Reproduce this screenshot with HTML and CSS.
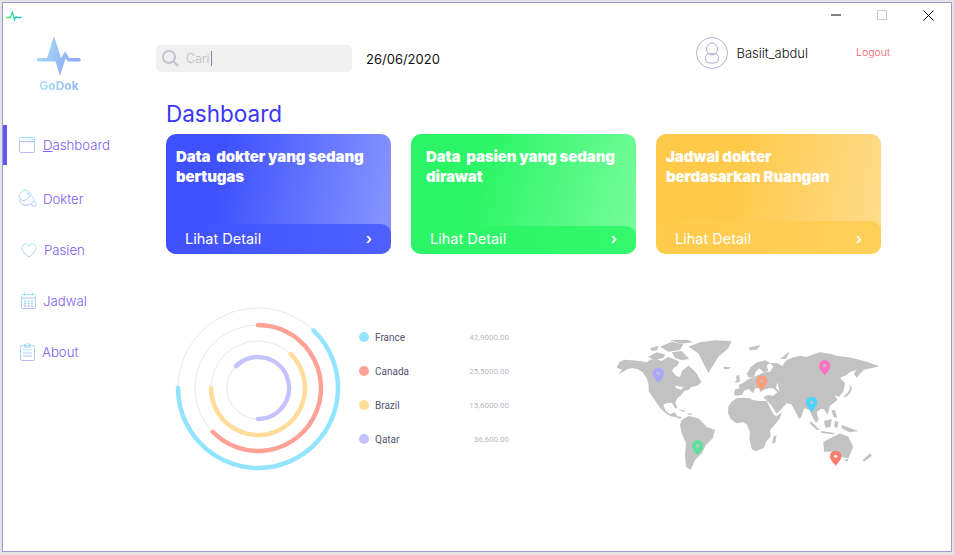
FILE: index.html
```html
<!DOCTYPE html>
<html lang="en">
<head>
    <meta charset="UTF-8">
    <meta name="viewport" content="width=device-width, initial-scale=1.0">
    <title>GoDok</title>
    <link rel="stylesheet" href="styles.css">
</head>
<body>
    <div class="window">
        <!-- Title bar -->
        <div class="titlebar">
            <svg class="app-icon" width="16" height="10" viewBox="0 0 16 10">
                <defs>
                    <linearGradient id="appGrad" x1="0" y1="0" x2="1" y2="0">
                        <stop offset="0" stop-color="#4df36a"/>
                        <stop offset="1" stop-color="#1cb8e0"/>
                    </linearGradient>
                </defs>
                <path d="M0 6.500H4.500L6.500 1L8.500 9L10 5.500L11 6.500H15.500" fill="none" stroke="url(#appGrad)" stroke-width="1.300"/>
            </svg>
            <div class="win-controls">
                <div class="win-btn"><svg width="10" height="10" viewBox="0 0 10 10"><path d="M0 5H10" stroke="#000" stroke-width="1"/></svg></div>
                <div class="win-btn"><svg width="10" height="10" viewBox="0 0 10 10"><rect x="0.500" y="0.500" width="9" height="9" fill="none" stroke="#ccc"/></svg></div>
                <div class="win-btn"><svg width="11" height="11" viewBox="0 0 11 11"><path d="M0.500 0.500L10.500 10.500M10.500 0.500L0.500 10.500" stroke="#000" stroke-width="1"/></svg></div>
            </div>
        </div>

        <div class="app">
            <!-- Sidebar -->
            <aside class="sidebar">
                <div class="logo">
                    <svg width="44" height="40" viewBox="0 0 44 40">
                        <defs>
                            <linearGradient id="logoGrad" x1="0" y1="0" x2="1" y2="0.300">
                                <stop offset="0" stop-color="#a6e4f8"/>
                                <stop offset="1" stop-color="#8fa8f5"/>
                            </linearGradient>
                            <linearGradient id="navGrad" x1="0" y1="0" x2="0" y2="1">
                                <stop offset="0" stop-color="#9fe9f4"/>
                                <stop offset="1" stop-color="#b4bcfb"/>
                            </linearGradient>
                        </defs>
                        <path d="M1.700 22H10L17 0L21.500 14L24 22L28 15.500L32.500 22H42A1.700 1.700 0 0 1 42 25.500H31L28.500 22.500L23 40L18.500 25.500H1.700A1.700 1.700 0 0 1 1.700 22Z" fill="url(#logoGrad)"/>
                    </svg>
                    <span class="logo-text">GoDok</span>
                </div>
                <nav class="nav">
                    <a class="nav-item active">
                        <svg width="20" height="20" viewBox="0 0 20 20" fill="none" stroke="url(#navGrad)">
                            <rect x="2.500" y="2.500" width="15" height="15" rx="1.500"/>
                            <path d="M2.500 6.500H17.500M11 4.500H12M13 4.500H14M15 4.500H16"/>
                        </svg>
                        <span><u>D</u>ashboard</span>
                    </a>
                    <a class="nav-item">
                        <svg width="20" height="20" viewBox="0 0 20 20" fill="none" stroke="url(#navGrad)">
                            <path d="M8 1C10 1 13 3 13.500 4.500C14 6 12 8 10.500 9.500C9 11 7 12 5.500 11.500C4 11 2 8.500 2 7C2 5 6 1 8 1Z"/>
                            <circle cx="11" cy="4.500" r="0.800"/>
                            <path d="M3 10C2.500 13 4 15.500 7 16C10 16.500 12 15.500 14.500 15"/>
                            <path d="M13.500 6C15.500 7.500 17 9.500 17 12.500"/>
                            <circle cx="17" cy="15" r="2.300"/>
                        </svg>
                        <span>Dokter</span>
                    </a>
                    <a class="nav-item shift-right">
                        <svg width="20" height="20" viewBox="0 0 20 20" fill="none" stroke="url(#navGrad)">
                            <path d="M12 17C9 14.500 5 11.500 5 7.800C5 5.500 6.800 4 8.500 4C10 4 11.300 4.800 12 6.200C12.700 4.800 14 4 15.500 4C17.200 4 19 5.500 19 7.800C19 11.500 15 14.500 12 17Z"/>
                        </svg>
                        <span>Pasien</span>
                    </a>
                    <a class="nav-item">
                        <svg width="20" height="20" viewBox="0 0 20 20" fill="none" stroke="url(#navGrad)">
                            <rect x="4.500" y="3.500" width="14" height="14" rx="1"/>
                            <path d="M4.500 7H18.500M7.500 1.500V4.500M15.500 1.500V4.500"/>
                            <path d="M7 10H9M10.500 10H12.500M14 10H16M7 12.500H9M10.500 12.500H12.500M14 12.500H16M7 15H9M10.500 15H12.500M14 15H16" stroke-width="1.500"/>
                        </svg>
                        <span>Jadwal</span>
                    </a>
                    <a class="nav-item shift-left">
                        <svg width="20" height="20" viewBox="0 0 20 20" fill="none" stroke="url(#navGrad)">
                            <rect x="3.500" y="3.500" width="14" height="15" rx="1.500"/>
                            <path d="M7.500 3.500V2.500H9C9 0.800 12 0.800 12 2.500H13.500V5H7.500Z"/>
                            <path d="M6 8H15M6 11H15M6 14H15"/>
                        </svg>
                        <span>About</span>
                    </a>
                </nav>
            </aside>

            <!-- Main content -->
            <main class="content">
                <div class="topbar">
                    <div class="search">
                        <svg width="19" height="19" viewBox="0 0 19 19" fill="none" stroke="#c4c2d0" stroke-width="2">
                            <circle cx="8" cy="8" r="6"/>
                            <path d="M12.500 12.500L17 17"/>
                        </svg>
                        <span class="search-text">Cari</span>
                    </div>
                    <div class="date">26/06/2020</div>
                    <div class="user">
                        <svg width="32" height="32" viewBox="0 0 32 32" fill="none" stroke="#b3b1cb">
                            <circle cx="16" cy="16" r="15.500"/>
                            <ellipse cx="16" cy="12" rx="5.500" ry="6"/>
                            <rect x="9.500" y="16.500" width="13" height="9.500" rx="4"/>
                        </svg>
                        <span class="user-name">Basiit_abdul</span>
                    </div>
                    <a class="logout">Logout</a>
                </div>

                <h1 class="page-title">Dashboard</h1>

                <div class="cards">
                    <div class="card card-blue">
                        <div class="card-title">Data&nbsp; dokter yang sedang<br>bertugas</div>
                        <div class="card-foot"><span>Lihat Detail</span><span class="chev">&rsaquo;</span></div>
                    </div>
                    <div class="card card-green">
                        <div class="card-title">Data&nbsp; pasien yang sedang<br>dirawat</div>
                        <div class="card-foot"><span>Lihat Detail</span><span class="chev">&rsaquo;</span></div>
                    </div>
                    <div class="card card-yellow">
                        <div class="card-title">Jadwal dokter<br>berdasarkan Ruangan</div>
                        <div class="card-foot"><span>Lihat Detail</span><span class="chev">&rsaquo;</span></div>
                    </div>
                </div>

                <div class="stats">
                    <svg class="rings" width="170" height="170" viewBox="0 0 170 170" fill="none" stroke-linecap="round">
                        <g stroke="#e9e9e9" stroke-width="1">
                            <circle cx="85" cy="85" r="80"/>
                            <circle cx="85" cy="85" r="63"/>
                            <circle cx="85" cy="85" r="47"/>
                            <circle cx="85" cy="85" r="31"/>
                        </g>
                        <g stroke-width="4.500">
                            <path d="M140.600 27.500A80 80 0 1 1 5 85" stroke="#93e5fd"/>
                            <path d="M85 22A63 63 0 1 1 39.700 128.800" stroke="#fea295"/>
                            <path d="M117.600 51.200A47 47 0 1 1 38 85" stroke="#fedd9b"/>
                            <path d="M63.100 63.100A31 31 0 1 1 85 116" stroke="#c5c3fe"/>
                        </g>
                    </svg>

                    <div class="legend">
                        <div class="legend-row"><i class="dot dot-france"></i><span class="legend-name">France</span><span class="legend-val">42,9000.00</span></div>
                        <div class="legend-row"><i class="dot dot-canada"></i><span class="legend-name">Canada</span><span class="legend-val">25,5000.00</span></div>
                        <div class="legend-row"><i class="dot dot-brazil"></i><span class="legend-name">Brazil</span><span class="legend-val">15,6000.00</span></div>
                        <div class="legend-row"><i class="dot dot-qatar"></i><span class="legend-name">Qatar</span><span class="legend-val">36,600.00</span></div>
                    </div>

                    <svg class="map" width="290" height="145" viewBox="0 0 870 435">
                        <g fill="#c2c2c2">
                            <!-- North America -->
                            <path d="M50 96L58 82L72 74L95 76L118 78L140 82L150 74L170 72L185 78L205 66L222 72L238 80L232 92L222 98L216 108L228 122L240 126L246 108L256 100L266 92L280 104L292 118L304 142L292 152L274 156L266 164L252 168L244 180L232 190L226 202L232 220L226 220L216 204L200 204L190 210L196 226L210 238L224 232L232 244L246 246L240 252L226 246L212 244L196 234L180 218L168 200L156 184L146 168L146 150L140 130L128 112L112 102L96 100L82 102L70 110L56 118L66 104L54 100Z"/>
                            <!-- Arctic islands -->
                            <path d="M145 65L170 52L195 58L190 70L160 74Z"/>
                            <path d="M180 35L215 20L250 28L240 45L205 50Z"/>
                            <path d="M215 52L245 48L268 72L245 76L225 68Z"/>
                            <path d="M150 40L175 32L172 45L155 48Z"/>
                            <path d="M208 15L262 14L280 22L245 26Z"/>
                            <!-- Greenland -->
                            <path d="M265 35L300 22L345 16L395 18L385 40L355 65L340 90L325 114L310 85L295 55Z"/>
                            <path d="M370 95L392 96L385 103L372 102Z"/>
                            <!-- Caribbean -->
                            <path d="M235 222L258 228L250 231Z"/>
                            <path d="M262 234L280 236L268 240Z"/>
                            <!-- South America -->
                            <path d="M245 255L265 243L295 250L320 275L345 285L338 310L318 330L305 355L285 375L272 405L258 395L255 360L258 325L245 295L240 270Z"/>
                            <!-- Africa -->
                            <path d="M385 215L395 200L410 190L430 188L448 190L460 196L480 198L500 198L508 214L520 238L528 244L546 232L538 252L522 272L510 285L512 305L498 320L492 338L470 348L456 344L448 310L450 290L440 268L428 262L410 265L392 252L384 235Z"/>
                            <path d="M520 305L530 300L526 322L516 328Z"/>
                            <!-- Eurasia -->
                            <path d="M402 178L404 164L418 160L416 150L432 142L446 132L470 130L488 124L492 112L510 110L520 95L510 84L530 84L548 92L556 78L575 68L600 62L620 66L640 58L660 52L690 56L710 62L740 66L770 72L800 80L838 94L812 100L792 104L780 116L770 128L762 118L768 104L750 112L735 122L720 128L735 145L730 170L716 186L704 180L712 195L700 205L690 212L682 240L672 222L662 222L650 232L656 255L648 264L638 246L628 225L612 220L604 245L598 252L582 222L574 208L560 205L548 218L530 236L516 214L504 200L490 186L504 180L520 182L532 172L520 160L505 160L490 165L480 172L478 160L465 160L460 175L445 162L432 168L425 180L405 182Z"/>
                            <path d="M440 118L452 96L472 82L496 76L510 84L500 92L505 108L490 112L478 100L466 112L462 126L448 128Z"/>
                            <path d="M448 132L470 122L492 112L492 130Z"/>
                            <path d="M408 122L418 120L420 140L404 144L410 134Z"/>
                            <path d="M445 38L482 30L470 44L450 46Z"/>
                            <path d="M540 72L570 48L558 72Z"/>
                            <path d="M748 148L756 160L750 175L738 186L730 186L744 172L750 160Z"/>
                            <!-- Indonesia, Philippines -->
                            <path d="M632 258L660 285L650 285L630 266Z"/>
                            <path d="M662 288L705 294L700 298L665 294Z"/>
                            <path d="M672 258L695 252L692 276L676 278Z"/>
                            <path d="M705 258L715 260L712 280L702 274Z"/>
                            <path d="M695 225L705 225L712 250L700 245Z"/>
                            <path d="M725 270L775 288L748 292L725 280Z"/>
                            <!-- Australia -->
                            <path d="M670 320L700 305L720 295L745 305L760 335L745 370L720 365L695 350L672 350Z"/>
                            <path d="M735 372L746 372L740 382Z"/>
                            <path d="M810 355L816 362L792 380L788 376Z"/>
                        </g>
                        <g fill="#fff">
                            <path d="M225 152L250 156L244 164L228 160Z"/>
                            <path d="M532 142L538 168L528 160Z"/>
                        </g>
                        <g>
                            <path transform="translate(175 121)" d="M0 23C-8 12-17 5-17-6A17 17 0 0 1 17-6C17 5 8 12 0 23Z" fill="#a9a6fd"/>
                            <path transform="translate(485 144)" d="M0 23C-8 12-17 5-17-6A17 17 0 0 1 17-6C17 5 8 12 0 23Z" fill="#fe9d78"/>
                            <path transform="translate(674 98)" d="M0 23C-8 12-17 5-17-6A17 17 0 0 1 17-6C17 5 8 12 0 23Z" fill="#fe72c2"/>
                            <path transform="translate(635 208)" d="M0 23C-8 12-17 5-17-6A17 17 0 0 1 17-6C17 5 8 12 0 23Z" fill="#4dd3fe"/>
                            <path transform="translate(293 338)" d="M0 23C-8 12-17 5-17-6A17 17 0 0 1 17-6C17 5 8 12 0 23Z" fill="#5fdf9a"/>
                            <path transform="translate(707 370)" d="M0 23C-8 12-17 5-17-6A17 17 0 0 1 17-6C17 5 8 12 0 23Z" fill="#fd7b6e"/>
                        </g>
                        <g fill="#c2c2c2">
                            <circle cx="175" cy="115" r="5"/>
                            <circle cx="485" cy="138" r="5"/>
                            <circle cx="674" cy="92" r="5"/>
                            <circle cx="635" cy="202" r="5"/>
                            <circle cx="293" cy="332" r="5"/>
                        </g>
                        <circle cx="707" cy="364" r="5" fill="#f2f2f2"/>
                    </svg>
                </div>
            </main>
        </div>
    </div>
</body>
</html>
```
FILE: styles.css
```css
html, body {
    height: 100%;
}
body {
    margin: 0;
    background-color: #e4e4e4;
    font-family: "Inter", "Liberation Sans", sans-serif;
    overflow: hidden;
}
.window {
    width: 950px;
    height: 550px;
    margin: 2px 0 0 2px;
    background-color: #fff;
    border: 1px solid #a098d2;
    box-sizing: border-box;
    display: flex;
    flex-direction: column;
}

/* Title bar */
.titlebar {
    height: 30px;
    display: flex;
    align-items: flex-start;
    justify-content: space-between;
    flex-shrink: 0;
}
.app-icon {
    margin: 8px 0 0 3px;
}
.win-controls {
    display: flex;
}
.win-btn {
    width: 46px;
    height: 24px;
    display: flex;
    align-items: center;
    justify-content: center;
}

/* Sidebar */
.app {
    display: flex;
    flex: 1;
}
.sidebar {
    width: 153px;
    flex-shrink: 0;
}
.logo {
    width: 44px;
    margin: 3px 0 0 34px;
    display: flex;
    flex-direction: column;
    align-items: center;
}
.logo-text {
    font-size: 12px;
    font-weight: 700;
    margin-top: 2px;
    line-height: 15px;
    color: transparent;
    background: linear-gradient(90deg, #a6e4f8, #90b4f6);
    -webkit-background-clip: text;
    background-clip: text;
}
.nav {
    margin-top: 32px;
    display: flex;
    flex-direction: column;
    gap: 11px;
}
.nav-item {
    height: 40px;
    padding-left: 14px;
    display: flex;
    align-items: center;
    gap: 6px;
    font-size: 13.200px;
    font-weight: 300;
    color: #7d5cf5;
}
.nav-item.active {
    border-left: 4px solid #5f57f2;
    padding-left: 10px;
    margin-bottom: 3px;
}
.shift-right span {
    margin-left: 1px;
}
.shift-left span {
    margin-left: -1px;
}

/* Top bar */
.content {
    flex: 1;
    padding: 12px 61px 0 0;
    min-width: 0;
}
.topbar {
    height: 27px;
    display: flex;
    align-items: center;
}
.search {
    width: 196px;
    height: 27px;
    padding-left: 5px;
    box-sizing: border-box;
    background-color: #f0f0f0;
    border-radius: 5px;
    display: flex;
    align-items: center;
    gap: 6px;
}
.search-text {
    font-size: 12.500px;
    font-weight: 300;
    color: #bcbcbc;
    padding-right: 1px;
    border-right: 1px solid #888;
    line-height: 15px;
}
.date {
    margin-left: 14px;
    font-size: 13px;
    color: #111;
}
.user {
    margin-left: auto;
    margin-top: -12px;
    display: flex;
    align-items: center;
    gap: 8px;
}
.user-name {
    font-size: 13px;
    font-weight: 300;
    color: #111;
}
.logout {
    margin: -12px 0 0 48px;
    width: 34px;
    font-size: 10.500px;
    font-weight: 300;
    color: #f0566a;
}

/* Cards */
.page-title {
    margin: 27px 0 0 10px;
    font-size: 22.500px;
    font-weight: 400;
    line-height: 30px;
    color: #3a36f5;
}
.cards {
    margin: 5px 0 0 10px;
    display: grid;
    grid-template-columns: repeat(3, 225px);
    gap: 20px;
}
.card {
    height: 120px;
    border-radius: 10px;
    display: flex;
    flex-direction: column;
    color: #fff;
    overflow: hidden;
}
.card-title {
    padding: 13px 10px 0 10px;
    font-size: 15px;
    font-weight: 900;
    line-height: 20px;
    letter-spacing: -0.100px;
}
.card-green .card-title {
    padding-left: 15px;
}
.card-foot {
    margin-top: auto;
    padding: 0 19px 5px 19px;
    box-sizing: border-box;
    display: flex;
    align-items: flex-end;
    justify-content: space-between;
    font-size: 14.500px;
    line-height: 20px;
    font-weight: 400;
    border-radius: 10px 10px 0 0;
}
.chev {
    font-size: 15px;
    font-weight: 600;
}
.card-blue {
    background: linear-gradient(100deg, #3f51fe 25%, #8493ff 95%);
}
.card-blue .card-foot {
    height: 30px;
    background: linear-gradient(90deg, #3f51fe, #4f60ff);
}
.card-green {
    background: linear-gradient(105deg, #2bf566 30%, #74fb9a 95%);
}
.card-green .card-foot {
    height: 28px;
    background: linear-gradient(90deg, #2bf566, #34f76d);
}
.card-yellow {
    background: linear-gradient(100deg, #ffca4a 35%, #ffda88 95%);
}
.card-yellow .card-foot {
    height: 33px;
    background: linear-gradient(90deg, #ffcb4b, #ffcf59);
}

/* Chart and map row */
.stats {
    margin: 49px 0 0 17px;
    display: flex;
    align-items: flex-start;
}
.legend {
    width: 150px;
    margin: 17px 0 0 16px;
}
.legend-row {
    height: 34px;
    display: flex;
    align-items: center;
}
.dot {
    width: 10px;
    height: 10px;
    border-radius: 50%;
    margin-right: 6px;
}
.dot-france { background-color: #93e5fd; }
.dot-canada { background-color: #fea295; }
.dot-brazil { background-color: #fedd9b; }
.dot-qatar { background-color: #c5c3fe; }
.legend-name {
    font-family: "Roboto", sans-serif;
    font-size: 10px;
    color: #56546e;
}
.legend-val {
    margin-left: auto;
    font-family: "Roboto", sans-serif;
    font-size: 8px;
    color: #b8b8c2;
}
.map {
    margin: 32px 0 0 auto;
}
```
